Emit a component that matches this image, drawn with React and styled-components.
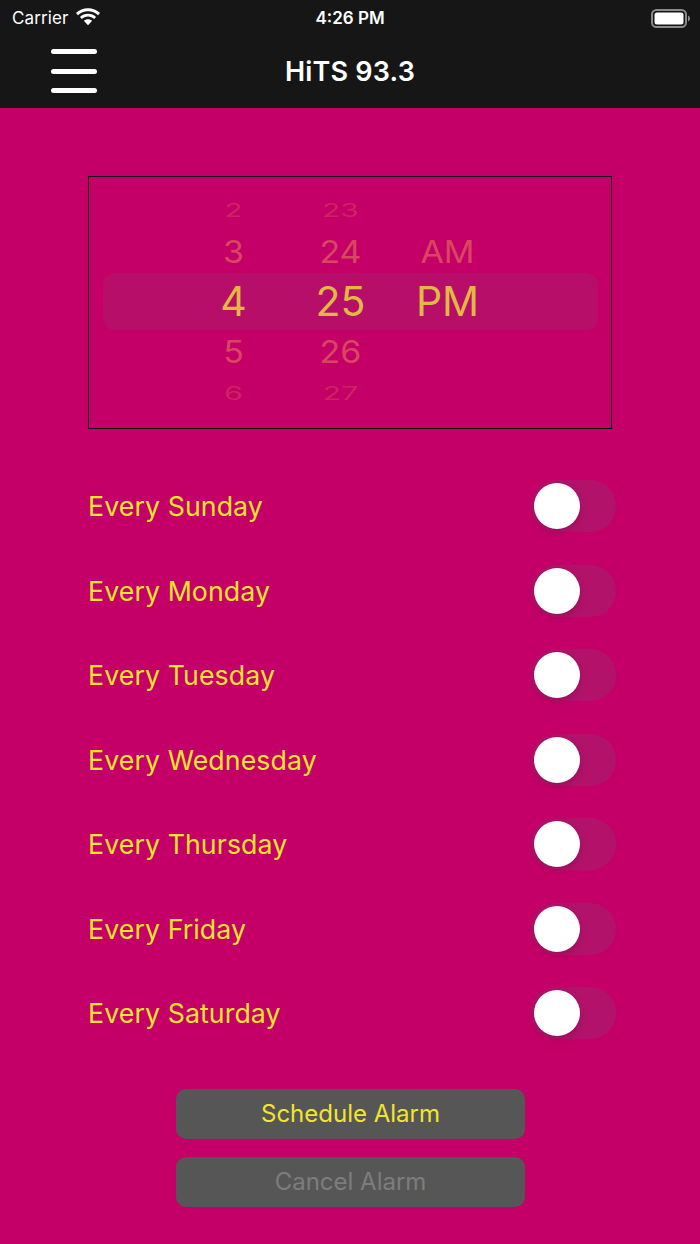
import { useState } from 'react';
import styled, { createGlobalStyle } from 'styled-components';

const GlobalStyle = createGlobalStyle`
  html, body {
    margin: 0;
    padding: 0;
    background: #c40068;
  }
  * {
    box-sizing: border-box;
  }
`;

const DAYS = ['Sunday', 'Monday', 'Tuesday', 'Wednesday', 'Thursday', 'Friday', 'Saturday'];

const WHEEL = [
  { hour: '2', minute: '23', period: '', tone: 'far', height: 40 },
  { hour: '3', minute: '24', period: 'AM', tone: 'near', height: 43 },
  { hour: '4', minute: '25', period: 'PM', tone: 'selected', height: 57 },
  { hour: '5', minute: '26', period: '', tone: 'near', height: 43 },
  { hour: '6', minute: '27', period: '', tone: 'far', height: 40 },
];

const WifiIcon = () => (
  <svg width="26" height="19" viewBox="0 0 26 19">
    <path d="M13 3.2c3.9 0 7.4 1.5 10 4l2-2.1C21.9 2 17.6 0.2 13 0.2S4.1 2 1 5.1l2 2.1c2.6-2.5 6.1-4 10-4z" fill="#fff" />
    <path d="M13 8.6c2.4 0 4.5.9 6.1 2.4l2-2.1C19 6.9 16.1 5.7 13 5.7S7 6.9 4.9 8.9l2 2.1c1.6-1.5 3.7-2.4 6.1-2.4z" fill="#fff" />
    <path d="M13 11.2c-1.7 0-3.1.6-4.2 1.6L13 17.3l4.2-4.5c-1.1-1-2.5-1.6-4.2-1.6z" fill="#fff" />
  </svg>
);

const BatteryIcon = () => (
  <svg width="40" height="19" viewBox="0 0 40 19">
    <rect x="1" y="1" width="34" height="17" rx="4.5" fill="none" stroke="#8a8a8a" strokeWidth="2" />
    <rect x="3.5" y="3.5" width="29" height="12" rx="2.5" fill="#fff" />
    <path d="M37 6.5v6c1.2-.4 2-1.6 2-3s-.8-2.6-2-3z" fill="#8a8a8a" />
  </svg>
);

const Toggle = ({ on, onClick }) => (
  <Track $on={on} onClick={onClick}>
    <Thumb $on={on} />
  </Track>
);

const App = () => {
  const [repeat, setRepeat] = useState(DAYS.map(() => false));

  const toggleDay = (index) => {
    setRepeat(prev => prev.map((v, i) => (i === index ? !v : v)));
  };

  return (
    <Page>
      <GlobalStyle />
      <Header>
        <StatusBar>
          <Carrier>
            Carrier
            <WifiIcon />
          </Carrier>
          <Clock>4:26 PM</Clock>
          <BatteryIcon />
        </StatusBar>
        <NavBar>
          <MenuButton aria-label="Menu">
            <MenuLine />
            <MenuLine />
            <MenuLine />
          </MenuButton>
          <Title>HiTS 93.3</Title>
        </NavBar>
      </Header>

      <Main>
        <PickerBox>
          {WHEEL.map(row => (
            <WheelRow key={row.hour} $tone={row.tone} $height={row.height}>
              <WheelCell $tone={row.tone}>{row.hour}</WheelCell>
              <WheelCell $tone={row.tone}>{row.minute}</WheelCell>
              <WheelCell $tone={row.tone}>{row.period}</WheelCell>
            </WheelRow>
          ))}
        </PickerBox>

        <DayList>
          {DAYS.map((day, i) => (
            <DayRow key={day}>
              <DayLabel>Every {day}</DayLabel>
              <Toggle on={repeat[i]} onClick={() => toggleDay(i)} />
            </DayRow>
          ))}
        </DayList>

        <Actions>
          <ActionButton>Schedule Alarm</ActionButton>
          <ActionButton $disabled>Cancel Alarm</ActionButton>
        </Actions>
      </Main>
    </Page>
  );
};

const Page = styled.div`
  min-height: 1244px;
  background: #c40068;
  font-family: Inter, 'Noto Sans', sans-serif;
`;

const Header = styled.header`
  background: #161616;
  height: 108px;
  display: flex;
  flex-direction: column;
`;

const StatusBar = styled.div`
  height: 36px;
  display: flex;
  align-items: center;
  justify-content: space-between;
  padding: 0 9px 0 12px;
  color: #fff;
  position: relative;
`;

const Carrier = styled.div`
  display: flex;
  align-items: center;
  gap: 7px;
  font-size: 17px;
  letter-spacing: 0.1px;

  svg {
    margin-top: -2px;
  }
`;

const Clock = styled.div`
  position: absolute;
  left: 0;
  right: 0;
  text-align: center;
  font-size: 17px;
  font-weight: 600;
  pointer-events: none;
`;

const NavBar = styled.div`
  flex: 1;
  display: flex;
  align-items: center;
  justify-content: center;
  position: relative;
`;

const MenuButton = styled.button`
  position: absolute;
  left: 51px;
  top: 13px;
  width: 46px;
  height: 44px;
  padding: 0;
  border: none;
  background: none;
  display: flex;
  flex-direction: column;
  justify-content: space-between;
  cursor: pointer;
`;

const MenuLine = styled.span`
  display: block;
  height: 5px;
  border-radius: 3px;
  background: #fff;
`;

const Title = styled.h1`
  margin: 0;
  color: #fff;
  font-size: 27px;
  font-weight: 600;
  letter-spacing: 0.2px;
  margin-top: -2px;
`;

const Main = styled.main`
  padding: 68px 84px 0 88px;
`;

const PickerBox = styled.div`
  width: 524px;
  height: 253px;
  border: 1.5px solid #111;
  padding: 13px 13.5px 0;
  display: flex;
  flex-direction: column;
`;

const toneColor = {
  far: 'rgba(214, 60, 94, 0.6)',
  near: '#d84660',
  selected: '#e0b944',
};

const toneSize = {
  far: '30px',
  near: '34px',
  selected: '41px',
};

const WheelRow = styled.div`
  height: ${p => p.$height}px;
  display: grid;
  grid-template-columns: repeat(3, 80px);
  column-gap: 27px;
  padding-left: 91px;
  align-items: center;
  border-radius: 12px;
  background: ${p => (p.$tone === 'selected' ? 'rgba(160, 40, 110, 0.35)' : 'transparent')};
`;

const WheelCell = styled.span`
  text-align: center;
  color: ${p => toneColor[p.$tone]};
  font-size: ${p => toneSize[p.$tone]};
  line-height: 1;
  transform: ${p => (p.$tone === 'far' ? 'scaleY(0.62)' : p.$tone === 'near' ? 'scaleY(0.92)' : 'none')};
`;

const DayList = styled.div`
  margin-top: 35px;
  display: flex;
  flex-direction: column;
`;

const DayRow = styled.div`
  height: 84.5px;
  display: flex;
  align-items: center;
  justify-content: space-between;
`;

const DayLabel = styled.span`
  color: #f3e52b;
  font-size: 26.7px;
  letter-spacing: 0.1px;
`;

const Track = styled.div`
  width: 85px;
  height: 52px;
  border-radius: 26px;
  padding: 3px;
  background: ${p => (p.$on ? '#4cd964' : 'rgba(160, 40, 110, 0.45)')};
  display: flex;
  justify-content: ${p => (p.$on ? 'flex-end' : 'flex-start')};
  cursor: pointer;
`;

const Thumb = styled.div`
  width: 46px;
  height: 46px;
  border-radius: 50%;
  background: #fff;
  box-shadow: 0 3px 8px rgba(0, 0, 0, 0.15), 0 0 0 1px rgba(0, 0, 0, 0.04);
`;

const Actions = styled.div`
  margin-top: 33px;
  display: flex;
  flex-direction: column;
  align-items: center;
  gap: 18px;
  padding-right: 3px;
`;

const ActionButton = styled.button`
  width: 349px;
  height: 50px;
  border: none;
  border-radius: 10px;
  background: #565656;
  color: ${p => (p.$disabled ? '#7d7d7d' : '#f3e52b')};
  font-family: Inter, 'Noto Sans', sans-serif;
  font-size: 24px;
  cursor: ${p => (p.$disabled ? 'default' : 'pointer')};
`;

export default App;
